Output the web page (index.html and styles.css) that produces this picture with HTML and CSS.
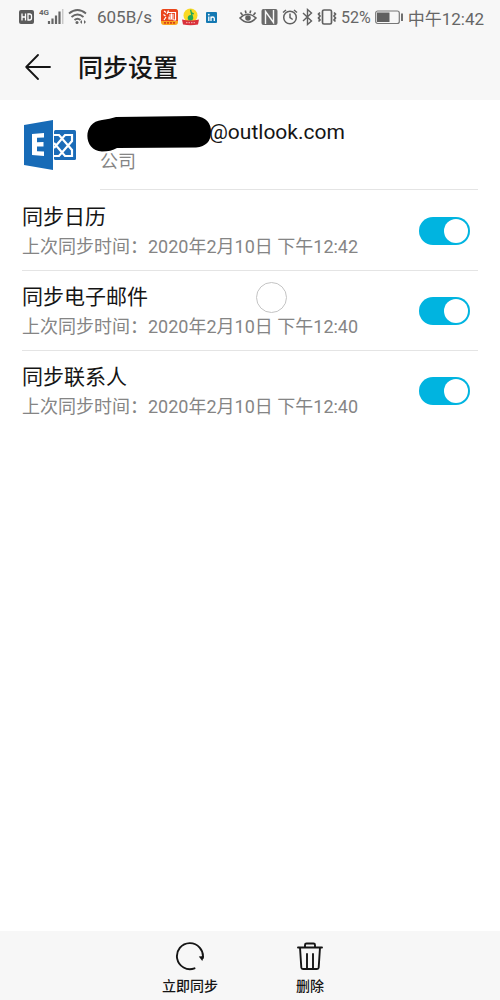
FILE: index.html
```html
<!DOCTYPE html>
<html lang="zh-CN">
<head>
<meta charset="utf-8">
<meta name="viewport" content="width=device-width, initial-scale=1">
<title>同步设置</title>
<link rel="stylesheet" href="styles.css">
</head>
<body>
<div class="screen">
  <header class="top">
    <div class="status">
      <div class="status-left">
        <svg class="hd" width="16" height="14" viewBox="0 0 16 14"><rect width="15" height="14" rx="2" fill="#5c5c5c"/><path d="M3 3.500v7M6.500 3.500v7M3 7h3.500M9 4h1.500q2 0 2 2v2q0 2-2 2H9z" fill="none" stroke="#fff" stroke-width="1.300"/></svg>
        <svg class="signal" width="25" height="18" viewBox="0 0 25 18"><text class="net" x="0" y="7">4G</text><path d="M10 13v3M13.500 10.500V16M17 7.500V16M20.500 3.500V16" stroke="#666" stroke-width="2.200"/><path d="M23.700 1v15" stroke="#c8c8c8" stroke-width="1.500"/></svg>
        <svg class="wifi" width="20" height="18" viewBox="0 0 20 18" fill="none" stroke="#666" stroke-width="1.900"><path d="M1 5.500q8.500-7 17 0M3.500 9q6-5 12 0M6.500 12q3-2.500 6 0"/><circle cx="9" cy="14.500" r="1.500" fill="#666" stroke="none"/><path d="M14 12v4l-2-2zM16 12v4l2-2z" fill="#666" stroke="none"/></svg>
        <span class="speed">605B/s</span>
        <svg class="taobao" width="18" height="18" viewBox="0 0 18 18"><rect y="1" width="17" height="16" rx="3" fill="#f9a51f"/><path d="M3 1h11q3 0 3 3v9H0V4q0-3 3-3z" fill="#e9451e"/><path d="M3 3l2 1.500M2.500 6.500L4.500 8M3 12l2-3M7.500 2.500L6 6M7 4.500h7.500V12h-2M8 7h5M7.500 9h5.500M10.500 5.500V11M8 9.500V11h5" fill="none" stroke="#fff" stroke-width="1.200"/><path d="M3 14.800h11" stroke="#d8421b" stroke-width="1.800" stroke-dasharray="2 1"/></svg>
        <svg class="music" width="18" height="18" viewBox="0 0 18 18"><circle cx="8.500" cy="7.500" r="7" fill="#f9d923"/><path d="M8 2l1.200-.4.700 2.700 2.100.9-.4 1.200-1.300-.3.900 3.100a2.800 2.800 0 1 1-2-2z" fill="#22a658"/><path d="M0 11.500q8.500 2 17 0l-1 5q-7.500 1.500-15 0z" fill="#d9303a"/><path d="M4 14.700h9" stroke="#f6b6b6" stroke-dasharray="1.500 1"/></svg>
        <svg class="linkedin" width="11" height="11" viewBox="0 0 11 11"><rect width="11" height="11" rx="1" fill="#1479b3"/><path d="M2.800 4.500V9M5 9V4.500M5 6.500Q5.200 5 6.700 5T8.300 6.500V9" fill="none" stroke="#fff" stroke-width="1.300"/><circle cx="2.800" cy="2.600" r=".9" fill="#fff"/></svg>
      </div>
      <div class="status-right">
        <svg width="18" height="18" viewBox="0 0 18 18" fill="none" stroke="#606060" stroke-width="1.600"><path d="M1 10q8-7.500 16 0-8 8.500-16 0zM3.500 7L1.500 4.500M7 5.200L6.300 2.500M11 5.200l.7-2.700M14.500 7l2-2.500"/><circle cx="9" cy="10" r="2" fill="#606060"/></svg>
        <svg width="17" height="18" viewBox="0 0 17 18"><rect x=".5" y="1" width="16" height="16" rx="2" fill="#6a6a6a"/><path d="M4.500 16V3.500l8 11V2" fill="none" stroke="#f7f7f7" stroke-width="1.400"/></svg>
        <svg width="16" height="18" viewBox="0 0 16 18" fill="none" stroke="#606060" stroke-width="1.500"><circle cx="8" cy="9.500" r="6.300"/><path d="M8 5.500v4l2.700 2M1 4.500L4 2M15 4.500L12 2"/></svg>
        <svg width="11" height="18" viewBox="0 0 11 18" fill="none" stroke="#606060" stroke-width="1.400"><path d="M1 5l8.500 8L5.500 16.500v-15L9.500 5 1 13"/></svg>
        <svg class="vibrate" width="20" height="18" viewBox="0 0 20 18" fill="none" stroke="#606060" stroke-width="1.700"><rect x="5.500" y="2" width="9" height="14" rx="1.500"/><path d="M3 4.500L1.500 6 3 8 1.500 10 3 12l-1.500 1.500M17 4.500L18.500 6 17 8l1.500 2-1.500 2 1.500 1.500"/></svg>
        <span class="percent">52%</span>
        <svg width="29" height="18" viewBox="0 0 29 18"><rect x=".7" y="3" width="23.600" height="12.500" rx="2" fill="none" stroke="#777" stroke-width="1.200"/><rect x="2" y="4.500" width="12.500" height="9.500" fill="#606060"/><path d="M27 5.500v7.500" stroke="#606060" stroke-width="1.800"/></svg>
        <time class="clock">中午12:42</time>
      </div>
    </div>
    <div class="titlebar">
      <button class="back" type="button" aria-label="返回"><svg width="26" height="26" viewBox="0 0 26 26" fill="none" stroke="#151515" stroke-width="1.800" stroke-linecap="round" stroke-linejoin="round"><path d="M25 13H1.200M13 1L1.200 13 13 25"/></svg></button>
      <h1>同步设置</h1>
    </div>
  </header>

  <main>
    <section class="account">
      <svg class="exchange" width="54" height="52" viewBox="0 0 54 52">
        <rect x="31" y="11" width="22" height="30" rx="1.500" fill="#1b6cb8"/>
        <path d="M31 16h5l13 15v6h-7L31 24M31 37h5l13-15v-6h-7L31 29" fill="none" stroke="#fff" stroke-width="2.200"/>
        <path d="M1 6L30 1v50L1 46z" fill="#176bb7"/>
        <path d="M9 15l12-1v4.500l-7 .3v4.400l6.500-.1v4.400l-6.500-.1v4.800l7 .4v4.500L9 36z" fill="#fff"/>
      </svg>
      <div class="account-text">
        <div class="email">
          <svg class="redaction" width="125" height="36" viewBox="0 0 125 36"><path d="M15 4Q23 3 29 1L109 0Q124 2 124 16T109 31.500L30 32Q24 35.500 15 35.500C-4 35-5 6 15 4z"/></svg>
          <span>@outlook.com</span>
        </div>
        <div class="kind">公司</div>
      </div>
    </section>

    <div class="rows">
      <label class="row">
        <span class="row-text"><span class="name">同步日历</span><span class="last">上次同步时间：2020年2月10日 下午12:42</span></span>
        <input class="toggle" type="checkbox" checked>
      </label>
      <label class="row">
        <span class="row-text"><span class="name">同步电子邮件</span><span class="last">上次同步时间：2020年2月10日 下午12:40</span></span>
        <input class="toggle" type="checkbox" checked>
        <span class="touch"></span>
      </label>
      <label class="row">
        <span class="row-text"><span class="name">同步联系人</span><span class="last">上次同步时间：2020年2月10日 下午12:40</span></span>
        <input class="toggle" type="checkbox" checked>
      </label>
    </div>
  </main>

  <footer class="actions">
    <button class="action" type="button">
      <svg width="30" height="30" viewBox="0 0 30 30"><path d="M19.500 27.300A13 13 0 1 1 27.800 17" fill="none" stroke="#151515" stroke-width="1.900" stroke-linecap="round"/><path d="M23.800 15.500l5.200-.5-1.700 5z" fill="#151515"/></svg>
      <span>立即同步</span>
    </button>
    <button class="action" type="button">
      <svg width="30" height="30" viewBox="0 0 30 30" fill="none" stroke="#151515" stroke-width="1.900" stroke-linecap="round" stroke-linejoin="round"><path d="M3 6.500h24M10 6.500V4q0-1.500 1.500-1.500h7Q20 2.500 20 4v2.500M5 6.500l1.300 20q.1 1.500 1.700 1.500h14q1.600 0 1.700-1.500L25 6.500M12 13v14M18 13v14"/></svg>
      <span>删除</span>
    </button>
  </footer>
</div>
</body>
</html>
```
FILE: styles.css
```css
* {
  box-sizing: border-box;
}

body {
  margin: 0;
  background: #fff;
  color: #151515;
  font-family: Roboto, "Noto Sans CJK SC", sans-serif;
}

svg {
  display: block;
  flex: none;
}

button {
  padding: 0;
  border: 0;
  background: none;
  color: inherit;
  font: inherit;
}

.screen {
  display: flex;
  flex-direction: column;
  min-height: 100vh;
}

.top {
  background: #f7f7f7;
}

.status {
  display: flex;
  justify-content: space-between;
  align-items: center;
  height: 34px;
  padding: 0 16px 0 19px;
  color: #666;
  font-size: 16px;
  white-space: nowrap;
}

.status-left,
.status-right {
  display: flex;
  align-items: center;
}

.status-right {
  gap: 4px;
}

.signal {
  margin: 0 4px;
}

.net {
  font-size: 8px;
  font-weight: 700;
  fill: #666;
}

.speed {
  margin: 0 9px;
  font-size: 17px;
}

.music {
  margin: 0 6px 0 3px;
}

.clock {
  font-size: 17px;
}

.titlebar {
  display: flex;
  align-items: center;
  gap: 27px;
  height: 66px;
  padding: 0 25px;
}

.titlebar h1 {
  margin: 0;
  padding-top: 4px;
  font-size: 25px;
  font-weight: 500;
  line-height: 36px;
}

main {
  flex: 1;
}

.account {
  display: flex;
  gap: 23px;
  padding: 0 22px 0 23px;
}

.exchange {
  margin-top: 19px;
}

.account-text {
  flex: 1;
  padding: 16px 0 14px;
  border-bottom: 1px solid #e4e4e4;
}

.email {
  display: flex;
  height: 32px;
  margin-left: -13px;
  font-size: 21px;
  line-height: 32px;
}

.redaction {
  margin-right: -3px;
}

.kind {
  color: #858585;
  font-size: 18px;
  line-height: 27px;
}

.rows {
  padding: 1px 22px 0;
}

.row {
  position: relative;
  display: flex;
  justify-content: space-between;
  align-items: center;
  padding: 11px 8px 9px 0;
}

.row + .row {
  border-top: 1px solid #e4e4e4;
}

.row-text {
  display: flex;
  flex-direction: column;
}

.name {
  font-size: 21px;
  line-height: 31px;
}

.last {
  color: #858585;
  font-size: 18px;
  line-height: 28px;
}

.toggle {
  flex: none;
  display: flex;
  align-items: center;
  justify-content: flex-end;
  width: 51px;
  height: 28px;
  margin: 0 0 2px;
  padding: 0 2px;
  border-radius: 14px;
  background: #00b4e0;
  appearance: none;
}

.toggle::before {
  width: 24px;
  height: 24px;
  border-radius: 50%;
  background: #fff;
  content: "";
}

.toggle:not(:checked) {
  justify-content: flex-start;
  background: #ccc;
}

.touch {
  position: absolute;
  top: 11px;
  left: 234px;
  width: 31px;
  height: 31px;
  border: 1px solid #c4c4c4;
  border-radius: 50%;
}

.actions {
  display: flex;
  justify-content: center;
  padding: 10px 0 3px;
  background: #f7f7f7;
}

.action {
  display: flex;
  flex-direction: column;
  align-items: center;
  gap: 4px;
  width: 120px;
  font-size: 14px;
  font-weight: 500;
  line-height: 22px;
}
```
